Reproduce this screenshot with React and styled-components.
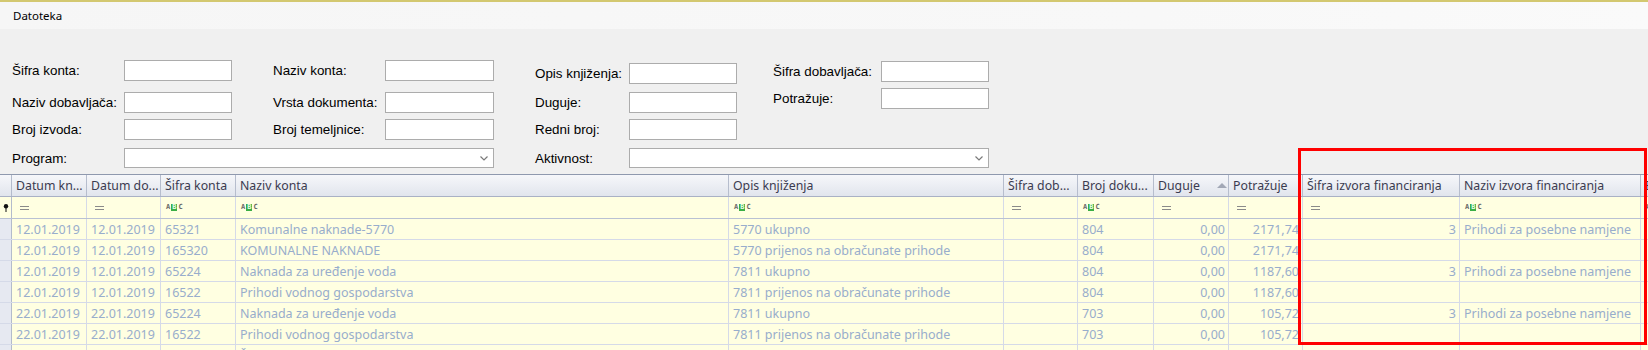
import React from 'react'
import styled, { createGlobalStyle } from 'styled-components'

const Page = createGlobalStyle`
    html, body {
        margin: 0;
        background: #f0f0f0;
        overflow: hidden;
    }
    body {
        font-family: "Liberation Sans", Arial, sans-serif;
    }
`

const Shell = styled.div`
    position: relative;
    width: 1648px;
    height: 350px;
    overflow: hidden;
    background: #f0f0f0;
`

const MenuBar = styled.div`
    height: 27px;
    border-top: 2px solid #d3c870;
    background: linear-gradient(to right, #f6f6f6, #f8f8f8 70%, #fafafa);
    display: flex;
    align-items: center;
    padding-left: 13px;
    font-family: "Noto Sans", sans-serif;
    font-size: 11.5px;
    color: #000;
`

const FilterPanel = styled.div`
    padding-left: 12px;
`

const TopFields = styled.div`
    display: flex;
`

const FieldColumn = styled.div`
    display: flex;
    flex-direction: column;
    width: ${p => p.$w}px;
`

const FieldRow = styled.div`
    display: flex;
    align-items: center;
    margin-top: ${p => p.$top}px;
`

const FieldLabel = styled.label`
    width: ${p => p.$w}px;
    font-size: 13.4px;
    color: #000;
    white-space: nowrap;
`

const TextBox = styled.div`
    box-sizing: border-box;
    width: ${p => p.$w || 108}px;
    height: 21px;
    border: 1px solid #acacac;
    background: #fff;
`

const ComboRow = styled.div`
    display: flex;
    align-items: center;
    margin-top: 8px;
`

const ComboBox = styled.div`
    box-sizing: border-box;
    width: ${p => p.$w}px;
    height: 20px;
    border: 1px solid #acacac;
    background: #fff;
    display: flex;
    align-items: center;
    justify-content: flex-end;
    padding-right: 5px;
    margin-right: ${p => p.$after || 0}px;
`

const GridWrap = styled.div`
    margin-top: 6px;
    width: 100%;
    overflow: hidden;
    font-family: "Noto Sans", sans-serif;
    font-size: 12.5px;
`

const HeaderRow = styled.div`
    display: grid;
    grid-template-columns: ${p => p.$cols};
    box-sizing: border-box;
    height: 23px;
    border-top: 1px solid #8f99ae;
    border-bottom: 1px solid #a9b1c5;
    background: linear-gradient(to bottom, #f6f7fa, #e1e5ed);
`

const HeaderCell = styled.div`
    display: flex;
    align-items: center;
    gap: 4px;
    padding: 0 1px 0 4px;
    border-right: 1px solid #b6bdcd;
    color: #3b3b50;
    font-size: 12.3px;
    white-space: nowrap;
    overflow: hidden;
`

const HeaderText = styled.span`
    flex: 1;
    overflow: hidden;
`

const FilterRow = styled.div`
    display: grid;
    grid-template-columns: ${p => p.$cols};
    box-sizing: border-box;
    height: 22px;
    background: #ffffe1;
    border-bottom: 1px solid #b9c1d3;
`

const FilterCell = styled.div`
    display: flex;
    align-items: center;
    padding-left: ${p => (p.$abc ? 5 : 8)}px;
    border-right: 1px solid #d5dae8;
`

const DataRow = styled.div`
    display: grid;
    grid-template-columns: ${p => p.$cols};
    box-sizing: border-box;
    height: 21px;
    background: #ffffe1;
    border-bottom: 1px solid #d5dae8;
`

const DataCell = styled.div`
    display: flex;
    align-items: center;
    justify-content: ${p => (p.$right ? 'flex-end' : 'flex-start')};
    padding: 0 3px 0 4px;
    border-right: 1px solid #d5dae8;
    color: #98adcc;
    white-space: nowrap;
    overflow: hidden;
`

const Indicator = styled.div`
    display: flex;
    align-items: center;
    justify-content: center;
    background: ${p => (p.$head ? 'transparent' : '#e6e9f1')};
    border-right: 1px solid #b3bbcc;
`

const EqualsMark = styled.span`
    width: 9px;
    height: 1px;
    padding-top: 1px;
    box-sizing: content-box;
    border-top: 1px solid #8a8a8a;
    border-bottom: 1px solid #8a8a8a;
`

const AbcMark = styled.span`
    display: flex;
    align-items: center;
    font-family: "DejaVu Sans Mono", monospace;
    font-size: 7px;
    font-weight: bold;
    line-height: 7px;
    color: #666;
`

const AbcB = styled.span`
    background: #3aae46;
    color: #e8ffe8;
    padding: 0 1px;
    margin: 0 1px;
`

const RedFrame = styled.div`
    position: absolute;
    left: 1298px;
    top: 148px;
    width: 349px;
    height: 197px;
    box-sizing: border-box;
    border: 3px solid #ff0000;
    pointer-events: none;
`

const Chevron = () => (
    <svg width="8" height="5" viewBox="0 0 8 5">
        <path d="M0.5 0.5 L4 4 L7.5 0.5" fill="none" stroke="#7a7a7a" strokeWidth="1.2" />
    </svg>
)

const SortArrow = () => (
    <svg width="10" height="5" viewBox="0 0 10 5">
        <path d="M0 5 L5 0 L10 5 Z" fill="#a2a8b6" />
    </svg>
)

const Pin = () => (
    <svg width="6" height="8" viewBox="0 0 6 8">
        <circle cx="3" cy="2.2" r="2.2" fill="#111" />
        <rect x="2.5" y="3" width="1" height="5" fill="#111" />
    </svg>
)

// naslovi su skraćeni kao u gridu (širina stupca)
const columns = [
    { key: 'dk', title: 'Datum kn...', w: 75, filter: 'eq' },
    { key: 'dd', title: 'Datum do...', w: 74, filter: 'eq' },
    { key: 'sk', title: 'Šifra konta', w: 75, filter: 'abc' },
    { key: 'nk', title: 'Naziv konta', w: 493, filter: 'abc' },
    { key: 'op', title: 'Opis knjiženja', w: 275, filter: 'abc' },
    { key: 'sd', title: 'Šifra dob...', w: 74, filter: 'eq' },
    { key: 'bd', title: 'Broj doku...', w: 76, filter: 'abc' },
    { key: 'du', title: 'Duguje', w: 75, filter: 'eq', right: true, sort: true },
    { key: 'po', title: 'Potražuje', w: 74, filter: 'eq', right: true },
    { key: 'si', title: 'Šifra izvora financiranja', w: 157, filter: 'eq', right: true },
    { key: 'ni', title: 'Naziv izvora financiranja', w: 181, filter: 'abc' },
    { key: 'ek', title: 'Ekon...', w: 140, filter: 'abc' },
]

const gridCols = '12px ' + columns.map(c => c.w + 'px').join(' ')

const rows = [
    ['12.01.2019', '12.01.2019', '65321', 'Komunalne naknade-5770', '5770 ukupno', '', '804', '0,00', '2171,74', '3', 'Prihodi za posebne namjene', ''],
    ['12.01.2019', '12.01.2019', '165320', 'KOMUNALNE NAKNADE', '5770 prijenos na obračunate prihode', '', '804', '0,00', '2171,74', '', '', ''],
    ['12.01.2019', '12.01.2019', '65224', 'Naknada za uređenje voda', '7811 ukupno', '', '804', '0,00', '1187,60', '3', 'Prihodi za posebne namjene', ''],
    ['12.01.2019', '12.01.2019', '16522', 'Prihodi vodnog gospodarstva', '7811 prijenos na obračunate prihode', '', '804', '0,00', '1187,60', '', '', ''],
    ['22.01.2019', '22.01.2019', '65224', 'Naknada za uređenje voda', '7811 ukupno', '', '703', '0,00', '105,72', '3', 'Prihodi za posebne namjene', ''],
    ['22.01.2019', '22.01.2019', '16522', 'Prihodi vodnog gospodarstva', '7811 prijenos na obračunate prihode', '', '703', '0,00', '105,72', '', '', ''],
    ['', '', '', 'Šumski doprinos', '', '', '', '', '', '', '', ''],
]

class App extends React.Component {
    render() {
        return (
            <Shell>
                <Page />
                <MenuBar>Datoteka</MenuBar>

                <FilterPanel>
                    <TopFields>
                        <FieldColumn $w={261}>
                            <FieldRow $top={31}>
                                <FieldLabel $w={112}>Šifra konta:</FieldLabel>
                                <TextBox />
                            </FieldRow>
                            <FieldRow $top={11}>
                                <FieldLabel $w={112}>Naziv dobavljača:</FieldLabel>
                                <TextBox />
                            </FieldRow>
                            <FieldRow $top={6}>
                                <FieldLabel $w={112}>Broj izvoda:</FieldLabel>
                                <TextBox />
                            </FieldRow>
                        </FieldColumn>

                        <FieldColumn $w={262}>
                            <FieldRow $top={31}>
                                <FieldLabel $w={112}>Naziv konta:</FieldLabel>
                                <TextBox $w={109} />
                            </FieldRow>
                            <FieldRow $top={11}>
                                <FieldLabel $w={112}>Vrsta dokumenta:</FieldLabel>
                                <TextBox $w={109} />
                            </FieldRow>
                            <FieldRow $top={6}>
                                <FieldLabel $w={112}>Broj temeljnice:</FieldLabel>
                                <TextBox $w={109} />
                            </FieldRow>
                        </FieldColumn>

                        <FieldColumn $w={238}>
                            <FieldRow $top={34}>
                                <FieldLabel $w={94}>Opis knjiženja:</FieldLabel>
                                <TextBox />
                            </FieldRow>
                            <FieldRow $top={8}>
                                <FieldLabel $w={94}>Duguje:</FieldLabel>
                                <TextBox />
                            </FieldRow>
                            <FieldRow $top={6}>
                                <FieldLabel $w={94}>Redni broj:</FieldLabel>
                                <TextBox />
                            </FieldRow>
                        </FieldColumn>

                        <FieldColumn $w={220}>
                            <FieldRow $top={32}>
                                <FieldLabel $w={108}>Šifra dobavljača:</FieldLabel>
                                <TextBox />
                            </FieldRow>
                            <FieldRow $top={6}>
                                <FieldLabel $w={108}>Potražuje:</FieldLabel>
                                <TextBox />
                            </FieldRow>
                        </FieldColumn>
                    </TopFields>

                    <ComboRow>
                        <FieldLabel $w={112}>Program:</FieldLabel>
                        <ComboBox $w={370} $after={41}><Chevron /></ComboBox>
                        <FieldLabel $w={94}>Aktivnost:</FieldLabel>
                        <ComboBox $w={360}><Chevron /></ComboBox>
                    </ComboRow>
                </FilterPanel>

                <GridWrap>
                    <HeaderRow $cols={gridCols}>
                        <Indicator $head />
                        {columns.map(c => (
                            <HeaderCell key={c.key}>
                                <HeaderText>{c.title}</HeaderText>
                                {c.sort && <SortArrow />}
                            </HeaderCell>
                        ))}
                    </HeaderRow>

                    <FilterRow $cols={gridCols}>
                        <Indicator $head><Pin /></Indicator>
                        {columns.map(c => (
                            <FilterCell key={c.key} $abc={c.filter === 'abc'}>
                                {c.filter === 'abc'
                                    ? <AbcMark>A<AbcB>B</AbcB>C</AbcMark>
                                    : <EqualsMark />}
                            </FilterCell>
                        ))}
                    </FilterRow>

                    {rows.map((r, i) => (
                        <DataRow key={i} $cols={gridCols}>
                            <Indicator />
                            {columns.map((c, j) => (
                                <DataCell key={c.key} $right={c.right}>{r[j]}</DataCell>
                            ))}
                        </DataRow>
                    ))}
                </GridWrap>

                <RedFrame />
            </Shell>
        )
    }
}

export default App
